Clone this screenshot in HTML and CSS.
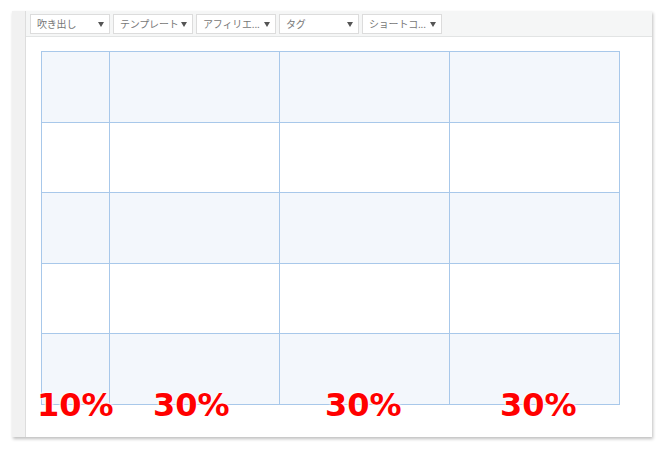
FILE: index.html
```html
<!DOCTYPE html>
<html>
<head>
<meta charset="utf-8">
<link rel="stylesheet" href="styles.css">
</head>
<body>
<div class="window">
  <div class="side"></div>
  <div class="main">
    <div class="toolbar">
      <div class="btn"><span>吹き出し</span><i class="arrow"></i></div>
      <div class="btn"><span>テンプレート</span><i class="arrow"></i></div>
      <div class="btn"><span>アフィリエ...</span><i class="arrow"></i></div>
      <div class="btn"><span>タグ</span><i class="arrow"></i></div>
      <div class="btn"><span>ショートコ...</span><i class="arrow"></i></div>
    </div>
    <div class="content">
      <table class="grid">
        <colgroup><col class="c1"><col class="c3"><col class="c3"><col class="c3"></colgroup>
        <tr class="shade"><td></td><td></td><td></td><td></td></tr>
        <tr><td></td><td></td><td></td><td></td></tr>
        <tr class="shade"><td></td><td></td><td></td><td></td></tr>
        <tr><td></td><td></td><td></td><td></td></tr>
        <tr class="shade"><td></td><td></td><td></td><td></td></tr>
      </table>
      <div class="labels">
        <span class="lbl l1">10%</span>
        <span class="lbl l2">30%</span>
        <span class="lbl l3">30%</span>
        <span class="lbl l4">30%</span>
      </div>
    </div>
  </div>
</div>
</body>
</html>
```
FILE: styles.css
```css
html, body { margin: 0; padding: 0; background: #fff; }
body { width: 664px; height: 451px; overflow: hidden; font-family: "Noto Sans CJK JP", "DejaVu Sans", sans-serif; }
.window {
  position: relative;
  margin: 11px 0 0 12px;
  width: 640px;
  height: 426px;
  display: flex;
  background: #fff;
  box-shadow: 1px 2px 3px rgba(0,0,0,0.25);
}
.side { width: 13px; background: #f1f1f1; border-right: 1px solid #dddddd; }
.main { flex: 1; display: flex; flex-direction: column; }
.toolbar {
  height: 26px;
  background: #f5f6f6;
  border-bottom: 1px solid #e2e4e4;
  display: flex;
  align-items: flex-start;
  gap: 3px;
  padding: 3px 0 0 4px;
  box-sizing: border-box;
}
.btn {
  box-sizing: border-box;
  width: 80px;
  height: 20px;
  background: #fff;
  border: 1px solid #dcdcdc;
  display: flex;
  align-items: center;
  justify-content: space-between;
  padding: 0 5px 0 6px;
  font-size: 10px;
  color: #777;
  white-space: nowrap;
}
.btn span { line-height: 1; letter-spacing: -0.2px; }
.arrow {
  width: 0; height: 0;
  border-left: 3.5px solid transparent;
  border-right: 3.5px solid transparent;
  border-top: 5px solid #555;
}
.content { position: relative; flex: 1; padding: 14px 0 0 15px; }
.grid {
  border-collapse: collapse;
  width: 579px;
  table-layout: fixed;
}
.grid .c1 { width: 68px; }
.grid .c3 { width: 170px; }
.grid td {
  border: 1px solid #a8c8ea;
  height: 69.6px;
  padding: 0;
}
.grid tr.shade td { background: #f3f7fc; }
.labels { position: absolute; left: 0; top: 0; width: 100%; height: 100%; pointer-events: none; }
.lbl {
  position: absolute;
  top: 350px;
  font-family: "DejaVu Sans", sans-serif;
  font-weight: bold;
  font-size: 32px;
  line-height: 36px;
  color: #ff0000;
  text-shadow: 0 0 2px #fff, 0 0 2px #fff, 0 0 3px #fff, 0 0 3px #fff;
}
.l1 { left: 11px; }
.l2 { left: 127px; }
.l3 { left: 299px; }
.l4 { left: 474px; }
```
